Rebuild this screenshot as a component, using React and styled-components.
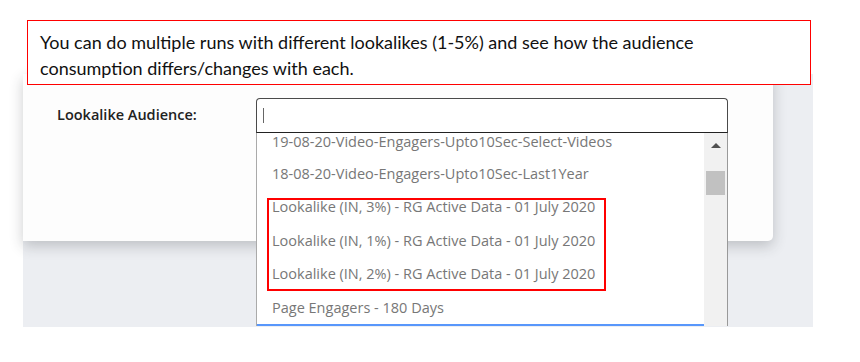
import React from 'react';
import styled, { createGlobalStyle } from 'styled-components';

const GlobalStyle = createGlobalStyle`
  html, body {
    margin: 0;
    padding: 0;
    background: #ffffff;
  }
`;

const items = [
  '19-08-20-Video-Engagers-Upto10Sec-Select-Videos',
  '18-08-20-Video-Engagers-Upto10Sec-Last1Year',
  'Lookalike (IN, 3%) - RG Active Data - 01 July 2020',
  'Lookalike (IN, 1%) - RG Active Data - 01 July 2020',
  'Lookalike (IN, 2%) - RG Active Data - 01 July 2020',
  'Page Engagers - 180 Days',
];

const Stage = styled.div`
  position: relative;
  width: 860px;
  height: 362px;
  overflow: hidden;
`;

const Screenshot = styled.div`
  margin: 74px 0 0 23px;
  width: 790px;
  height: 253px;
  background: #eceef2;
  display: flex;
  align-items: flex-start;
`;

const Card = styled.div`
  width: 750px;
  height: 167px;
  background: #fdfdfd;
  border-bottom-right-radius: 5px;
  box-shadow: 0 5px 14px rgba(40, 44, 52, 0.24);
  box-sizing: border-box;
  padding: 24px 0 0 34px;
`;

const FieldRow = styled.div`
  display: flex;
  align-items: flex-start;
`;

const Label = styled.label`
  width: 199px;
  padding-top: 7px;
  font-family: 'Open Sans', sans-serif;
  font-size: 14.5px;
  font-weight: 600;
  color: #222;
`;

const Select = styled.div`
  position: relative;
  width: 472px;
`;

const SearchInput = styled.div`
  height: 35px;
  box-sizing: border-box;
  border: 1px solid #4a4a4a;
  border-bottom-color: #222;
  border-radius: 4px 4px 0 0;
  background: #fff;
  display: flex;
  align-items: center;
  padding-left: 6px;
`;

const Caret = styled.span`
  width: 1px;
  height: 15px;
  background: #666;
`;

const Menu = styled.div`
  position: absolute;
  top: 35px;
  left: 0;
  width: 472px;
  height: 193px;
  box-sizing: border-box;
  border-left: 1px solid #aaa;
  border-right: 1px solid #999;
  background: #fff;
  display: flex;
  overflow: hidden;
`;

const Options = styled.ul`
  flex: 1;
  list-style: none;
  margin: 0;
  padding: 0;
`;

/* the list is scrolled a little: the first row shows only its lower part */
const Option = styled.li`
  height: ${p => (p.$partial ? '23.5px' : '33.5px')};
  line-height: ${p => (p.$partial ? '17px' : '33.5px')};
  padding-left: 15px;
  font-family: 'Open Sans', sans-serif;
  font-size: 14.5px;
  color: #777;
  white-space: nowrap;
  box-sizing: border-box;
`;

const ActiveOption = styled.li`
  height: 4px;
  background: #5897fb;
`;

const Scrollbar = styled.div`
  width: 23px;
  background: #f1f1f1;
  display: flex;
  flex-direction: column;
  align-items: center;
  padding-top: 10px;
  box-sizing: border-box;
`;

const ArrowUp = styled.span`
  width: 0;
  height: 0;
  border-left: 5px solid transparent;
  border-right: 5px solid transparent;
  border-bottom: 5px solid #505050;
`;

const Thumb = styled.span`
  margin-top: 23px;
  width: 19px;
  height: 24px;
  background: #c1c1c1;
`;

const Callout = styled.div`
  position: absolute;
  left: 27px;
  top: 20px;
  width: 784px;
  height: 65px;
  box-sizing: border-box;
  border: 1px solid #ff0000;
  background: #fff;
  padding: 8px 12px 0 12px;
  font-family: 'Lato', sans-serif;
  font-size: 18px;
  line-height: 26px;
  color: #111;
`;

const Highlight = styled.div`
  position: absolute;
  left: 267px;
  top: 198px;
  width: 339px;
  height: 93px;
  box-sizing: border-box;
  border: 2px solid #f00;
  pointer-events: none;
`;

export default function App() {
  return (
    <Stage>
      <GlobalStyle />
      <Screenshot>
        <Card>
          <FieldRow>
            <Label>Lookalike Audience:</Label>
            <Select>
              <SearchInput>
                <Caret />
              </SearchInput>
              <Menu>
                <Options>
                  {items.map((item, i) => (
                    <Option key={item} $partial={i === 0}>
                      {item}
                    </Option>
                  ))}
                  <ActiveOption />
                </Options>
                <Scrollbar>
                  <ArrowUp />
                  <Thumb />
                </Scrollbar>
              </Menu>
            </Select>
          </FieldRow>
        </Card>
      </Screenshot>
      <Callout>
        You can do multiple runs with different lookalikes (1-5%) and see how the audience
        <br />
        consumption differs/changes with each.
      </Callout>
      <Highlight />
    </Stage>
  );
}
